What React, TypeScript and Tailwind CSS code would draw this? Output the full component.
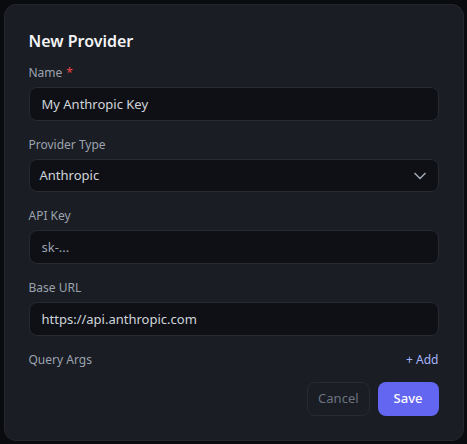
import React, { useState } from 'react';
import { ChevronDown } from 'lucide-react';

const Field: React.FC<{ label: string; required?: boolean; children: React.ReactNode }> = ({ label, required, children }) => (
  <div className="flex flex-col gap-1.5">
    <label className="text-xs leading-4 text-[#9ca3af]">
      {label}
      {required && <span className="ml-1 text-[#ef4444]">*</span>}
    </label>
    {children}
  </div>
);

const inputCls =
  'h-[34px] w-full rounded-lg border border-[#262a33] bg-[#0e1016] px-3 text-[13px] text-[#d1d5db] outline-none placeholder:text-[#9ca3af]';

export default function App() {
  const [name, setName] = useState('My Anthropic Key');
  const [apiKey, setApiKey] = useState('');
  const [baseUrl, setBaseUrl] = useState('https://api.anthropic.com');

  return (
    <div className="flex min-h-[444px] w-full items-start justify-center bg-[#0a0b0e] pt-1 font-['Noto_Sans',sans-serif]">
      <div className="w-[460px] rounded-xl border border-[#24272e] bg-[#1a1d23] p-6">
        <h2 className="text-base font-semibold leading-6 text-[#f3f4f6]">New Provider</h2>

        <div className="mt-3 flex flex-col gap-4">
          <Field label="Name" required>
            <input className={inputCls} value={name} onChange={(e) => setName(e.target.value)} />
          </Field>

          <Field label="Provider Type">
            <div className="flex h-[33px] w-full items-center justify-between rounded-lg border border-[#262a33] bg-[#0e1016] pl-2.5 pr-2 text-[13px] text-[#d1d5db]">
              <span>Anthropic</span>
              <ChevronDown size={20} strokeWidth={2} className="text-[#9ca3af]" />
            </div>
          </Field>

          <Field label="API Key">
            <input
              className={inputCls}
              placeholder="sk-..."
              value={apiKey}
              onChange={(e) => setApiKey(e.target.value)}
            />
          </Field>

          <Field label="Base URL">
            <input className={inputCls} value={baseUrl} onChange={(e) => setBaseUrl(e.target.value)} />
          </Field>

          <div className="flex items-center justify-between text-xs leading-4">
            <span className="text-[#9ca3af]">Query Args</span>
            <button type="button" className="text-[#a5b4fc]">+ Add</button>
          </div>
        </div>

        <div className="mt-3.5 flex justify-end gap-2">
          <button
            type="button"
            className="h-[34px] rounded-lg border border-[#262a33] px-2.5 text-[13px] text-[#6b7280]"
          >
            Cancel
          </button>
          <button
            type="button"
            className="h-[34px] rounded-lg bg-[#6366f1] px-4 text-[13px] font-medium text-white"
          >
            Save
          </button>
        </div>
      </div>
    </div>
  );
}
